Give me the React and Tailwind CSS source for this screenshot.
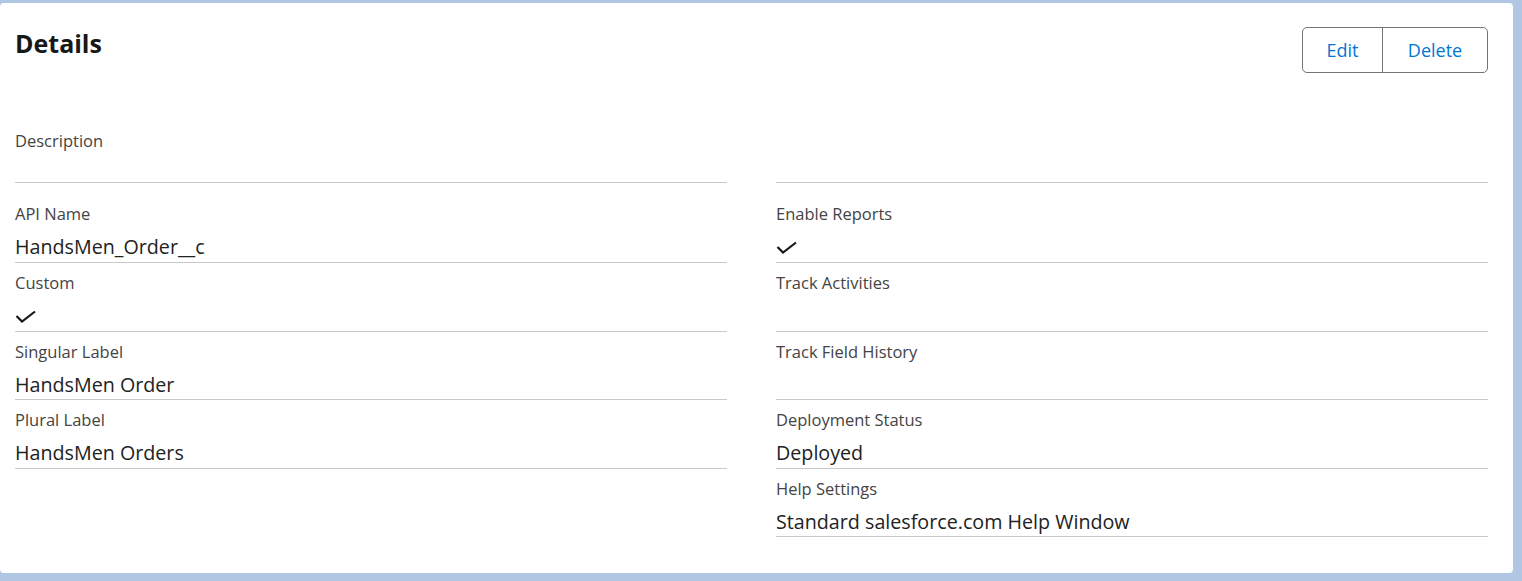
import React from 'react';

const font = { fontFamily: '"Open Sans", "Noto Sans", sans-serif' };

function Check() {
    return (
        <svg width="21" height="13" viewBox="0 0 21 13" className="mt-[15px]">
            <polyline points="1.5,6 7,11.5 20,1.5" fill="none" stroke="#181818" strokeWidth="2.2" />
        </svg>
    );
}

// một ô thông tin: nhãn ở trên, giá trị ở dưới, gạch chân
function Field({ label, value, check }) {
    return (
        <div className="h-full border-b border-[#c9c9c9]">
            {label && <div className="pt-[8px] text-[16.5px] leading-[24px] text-[#444444]">{label}</div>}
            {check ? (
                <Check />
            ) : (
                value && <div className="pt-[6px] text-[19.7px] leading-[30px] text-[#222222]">{value}</div>
            )}
        </div>
    );
}

export default function App() {
    return (
        <div className="h-[581px] bg-[#b1c6e2] pt-[3px]" style={font}>
            <div className="h-[570px] w-[1513px] rounded-[4px] bg-white pl-[15px] pr-[25px] pt-[24px]">
                {/* Tiêu đề + nút */}
                <div className="flex items-start justify-between">
                    <h1 className="text-[25px] font-bold leading-[32px] text-[#181818]">Details</h1>
                    <div className="flex h-[46px] rounded-[5px] border border-[#747474] text-[18px] text-[#0176d3]">
                        <button className="w-[80px] border-r border-[#747474]">Edit</button>
                        <button className="w-[104px]">Delete</button>
                    </div>
                </div>

                {/* Description */}
                <div className="mt-[48px] grid grid-cols-2 gap-x-[49px]">
                    <div className="h-[62px] border-b border-[#c9c9c9]">
                        <div className="pt-[8px] text-[16.5px] leading-[24px] text-[#444444]">Description</div>
                    </div>
                    <div className="h-[62px] border-b border-[#c9c9c9]" />
                </div>

                <div className="mt-[11px] grid grid-cols-2 grid-rows-[69px_69px_68px_69px_68px] gap-x-[49px]">
                    <Field label="API Name" value="HandsMen_Order__c" />
                    <Field label="Enable Reports" check />
                    <Field label="Custom" check />
                    <Field label="Track Activities" />
                    <Field label="Singular Label" value="HandsMen Order" />
                    <Field label="Track Field History" />
                    <Field label="Plural Label" value="HandsMen Orders" />
                    <Field label="Deployment Status" value="Deployed" />
                    <div />
                    <Field label="Help Settings" value="Standard salesforce.com Help Window" />
                </div>
            </div>
        </div>
    );
}
